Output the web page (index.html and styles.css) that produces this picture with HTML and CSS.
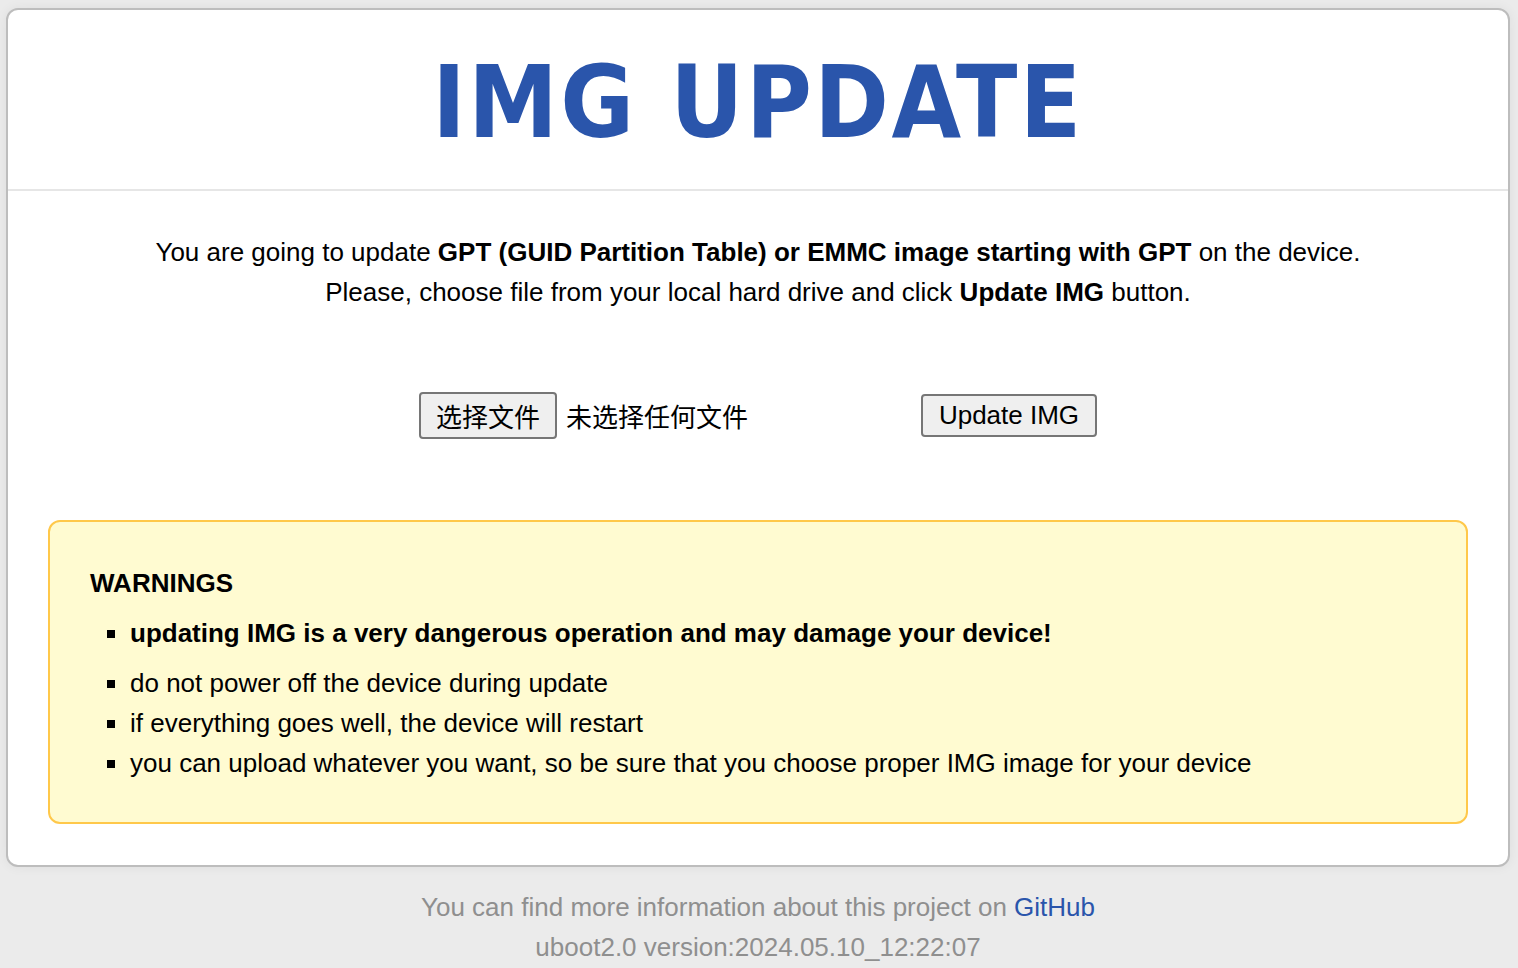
FILE: index.html
```html
<!DOCTYPE html>
<html lang="en">
<head>
<meta charset="utf-8">
<title>IMG UPDATE</title>
<link rel="stylesheet" href="styles.css">
</head>
<body>
<div class="card">
  <header class="head">
    <h1 class="title">IMG UPDATE</h1>
  </header>
  <section class="content">
    <p class="intro">You are going to update <b>GPT (GUID Partition Table) or EMMC image starting with GPT</b> on the device.<br>Please, choose file from your local hard drive and click <b>Update IMG</b> button.</p>
    <form class="upload">
      <div class="file">
        <span class="btn btn-file">选择文件</span>
        <span class="file-name">未选择任何文件</span>
      </div>
      <span class="btn btn-submit">Update IMG</span>
    </form>
    <div class="warn">
      <div class="warn-title">WARNINGS</div>
      <ul class="warn-list">
        <li class="strong">updating IMG is a very dangerous operation and may damage your device!</li>
        <li>do not power off the device during update</li>
        <li>if everything goes well, the device will restart</li>
        <li>you can upload whatever you want, so be sure that you choose proper IMG image for your device</li>
      </ul>
    </div>
  </section>
</div>
<footer class="foot">
  <div>You can find more information about this project on <a class="gh" href="#">GitHub</a></div>
  <div>uboot2.0 version:2024.05.10_12:22:07</div>
</footer>
</body>
</html>
```

FILE: styles.css
```css
html, body {
  margin: 0;
  padding: 0;
}
body {
  background: #ebebeb;
  font-family: "Liberation Sans", Arial, sans-serif;
  font-size: 26px;
  color: #000;
  padding: 8px 8px 0 6px;
  height: 968px;
  box-sizing: border-box;
  overflow: hidden;
}
.card {
  background: #fff;
  border: 2px solid #bdbdbd;
  border-radius: 12px;
  box-shadow: 0 0 12px rgba(0,0,0,0.06);
  height: 859px;
  box-sizing: border-box;
}
.head {
  border-bottom: 2px solid #e6e6e6;
  padding: 33px 0 26px;
  text-align: center;
}
.title {
  margin: 0;
  font-family: "DejaVu Sans Condensed", "DejaVu Sans", sans-serif;
  font-weight: bold;
  font-size: 100px;
  line-height: 120px;
  letter-spacing: 2.5px;
  color: #2a55ab;
}
.content {
  padding: 41px 40px 0;
}
.intro {
  margin: 0;
  text-align: center;
  line-height: 40px;
}
.upload {
  display: flex;
  justify-content: center;
  align-items: center;
  gap: 173px;
  margin: 80px 0 0;
}
.file {
  display: flex;
  align-items: center;
  gap: 9px;
}
.btn {
  display: inline-block;
  background: #efefef;
  border: 2px solid #767676;
  border-radius: 4px;
  font-size: 26px;
  box-sizing: border-box;
}
.btn-file {
  height: 47px;
  line-height: 43px;
  padding: 0 15px;
  font-family: "Noto Sans CJK SC", sans-serif;
}
.file-name {
  font-family: "Noto Sans CJK SC", sans-serif;
}
.btn-submit {
  height: 43px;
  line-height: 39px;
  padding: 0 16px;
}
.warn {
  margin-top: 81px;
  background: #fffbd1;
  border: 2px solid #ffc84a;
  border-radius: 12px;
  padding: 41px 40px 38px;
  height: 304px;
  box-sizing: border-box;
}
.warn-title {
  font-weight: bold;
  line-height: 40px;
}
.warn-list {
  margin: 10px 0 0;
  padding-left: 40px;
  list-style: square;
}
.warn-list li {
  line-height: 40px;
}
.warn-list li.strong {
  font-weight: bold;
  margin-bottom: 10px;
}
.foot {
  text-align: center;
  color: #8f8f8f;
  line-height: 40px;
  padding-top: 20px;
}
.gh {
  color: #2a55ab;
  text-decoration: none;
}
```
